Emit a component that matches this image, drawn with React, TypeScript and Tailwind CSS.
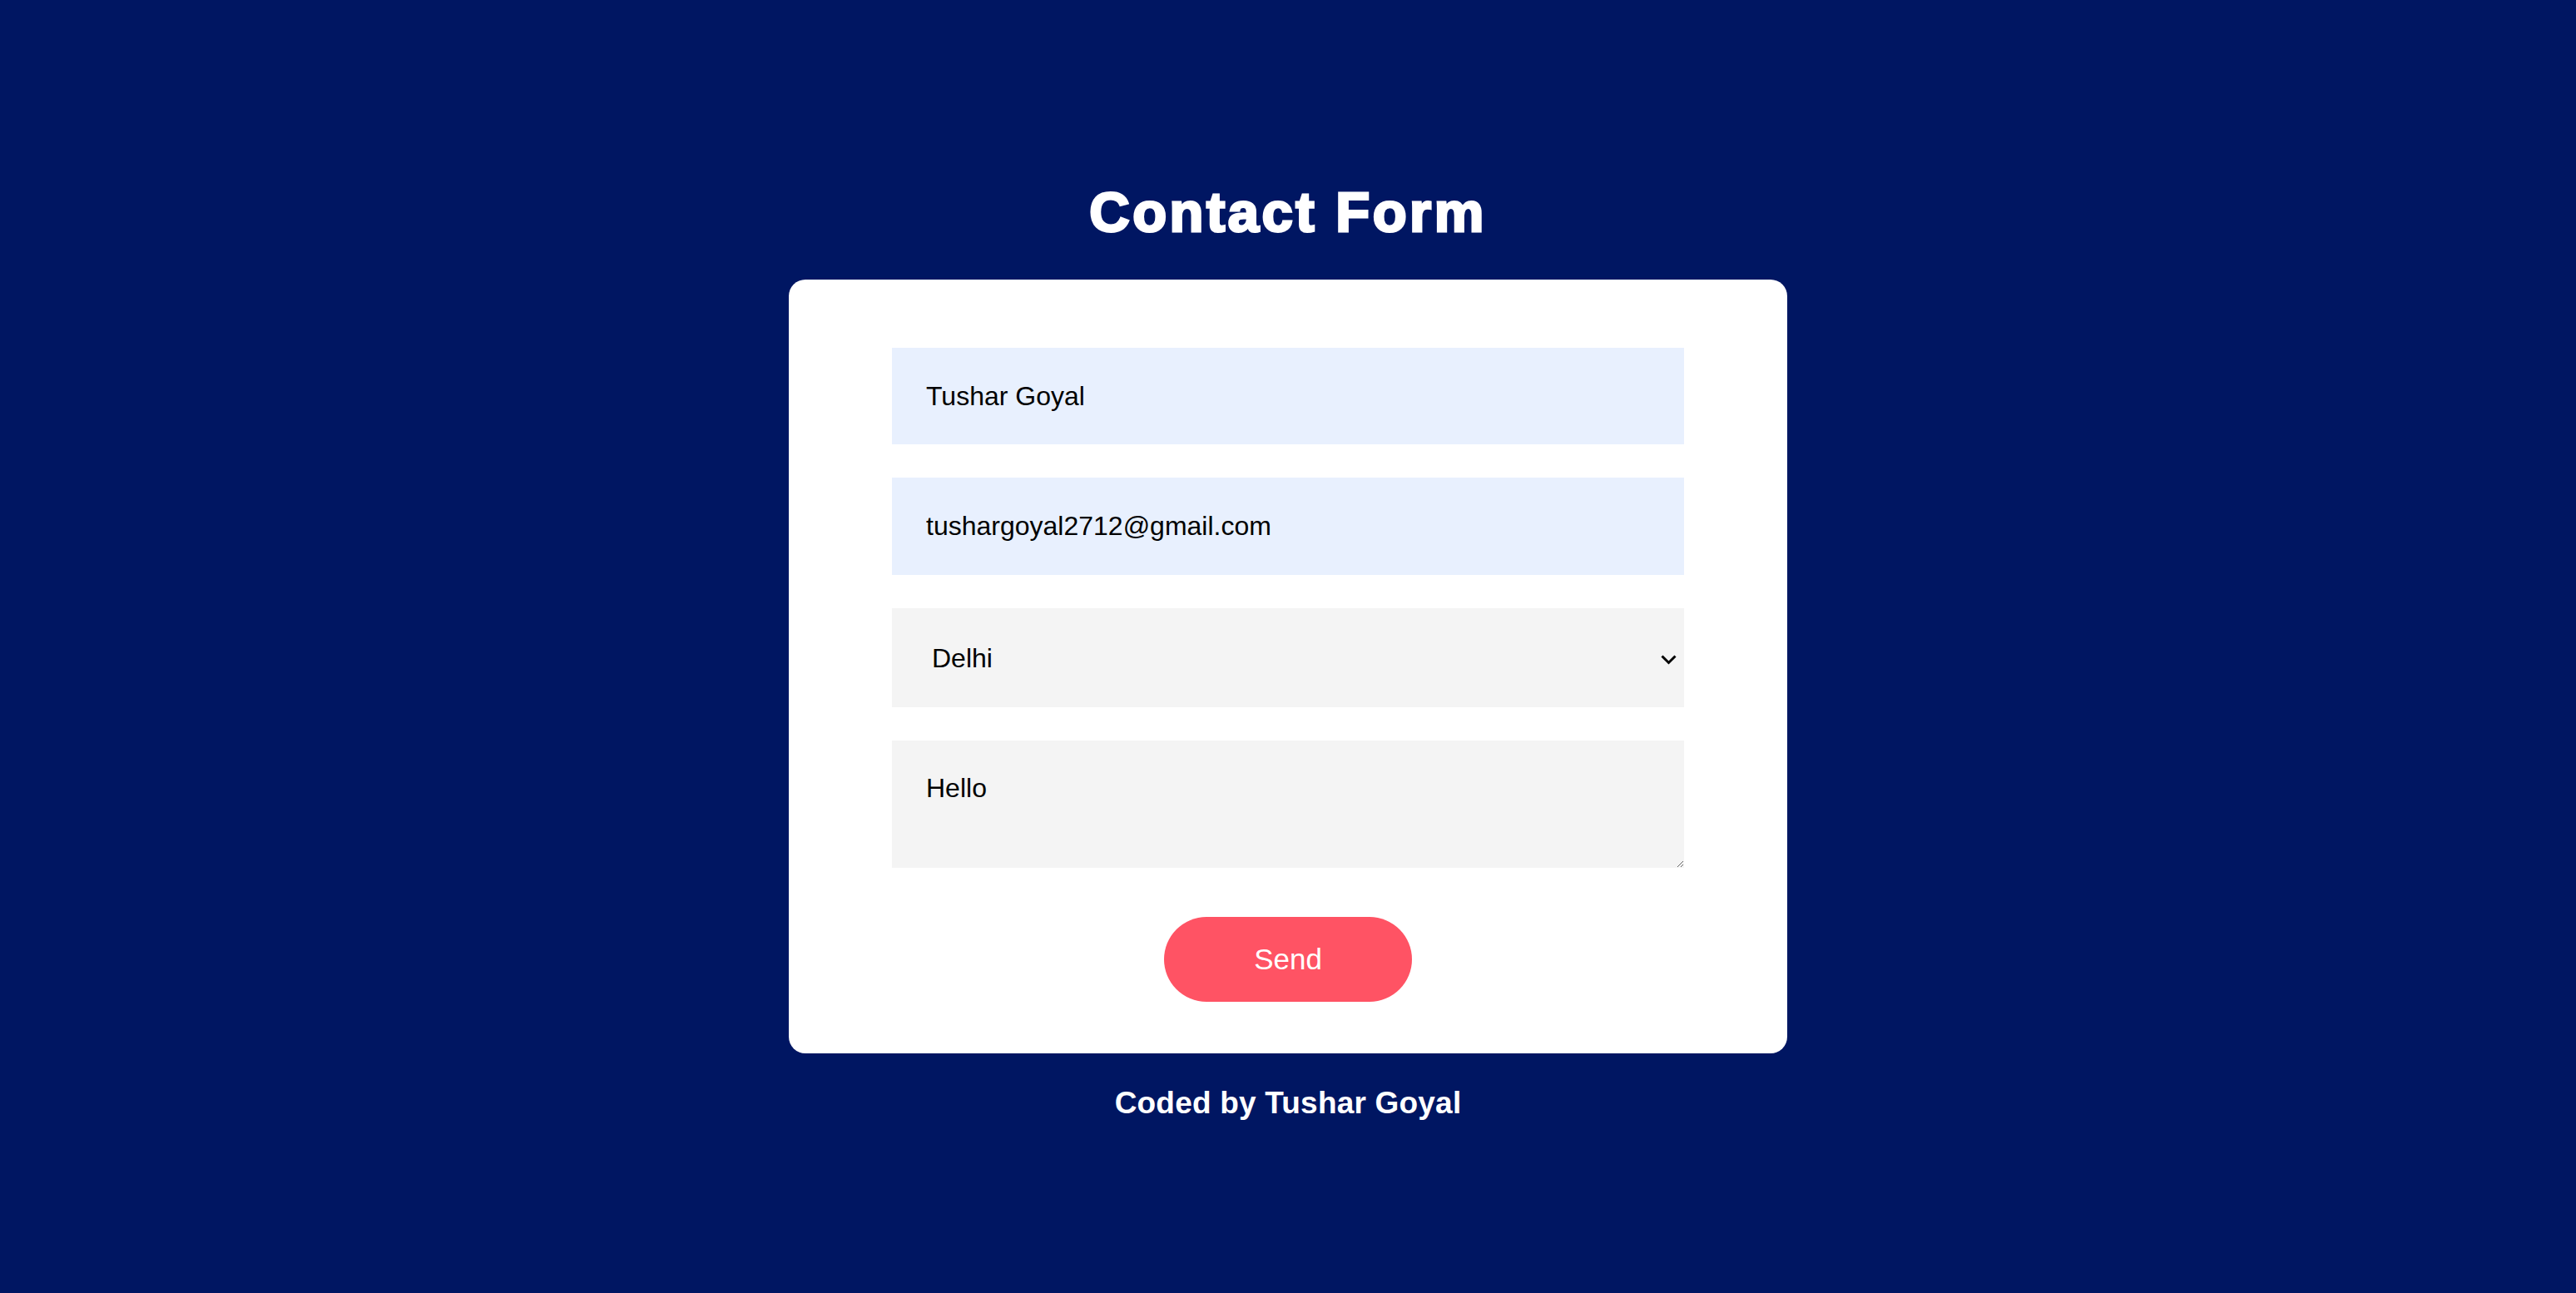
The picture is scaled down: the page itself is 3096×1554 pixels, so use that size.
import React from "react";

export default function App() {
  return (
    <div
      className="min-h-[1554px] w-full bg-[#001662] flex flex-col items-center pt-[221px]"
      style={{ fontFamily: '"Liberation Sans", Arial, sans-serif' }}
    >
      <h1 className="text-[67px] leading-none font-bold text-white tracking-[3.5px] [-webkit-text-stroke:3px_white]">
        Contact Form
      </h1>
      <form
        className="mt-[48px] w-[1200px] bg-white rounded-[20px] px-[124px] pt-[82px] pb-[62px] flex flex-col"
        onSubmit={(e) => e.preventDefault()}
      >
        <input
          type="text"
          defaultValue="Tushar Goyal"
          className="h-[116px] w-full bg-[#e8f0fe] px-[41px] text-[32px] text-black outline-none"
        />
        <input
          type="email"
          defaultValue="tushargoyal2712@gmail.com"
          className="mt-[40px] h-[117px] w-full bg-[#e8f0fe] px-[41px] text-[32px] text-black outline-none"
        />
        <div className="relative mt-[40px]">
          <select
            defaultValue="Delhi"
            className="appearance-none h-[119px] w-full bg-[#f4f4f4] pl-[48px] pr-[40px] text-[32px] text-black outline-none"
          >
            <option>Delhi</option>
            <option>Mumbai</option>
            <option>Bangalore</option>
          </select>
          <svg
            className="absolute right-[9px] top-[56px] pointer-events-none"
            width="19"
            height="12"
            viewBox="0 0 19 12"
            fill="none"
          >
            <path d="M1.5 1.5 L9.5 9.5 L17.5 1.5" stroke="black" strokeWidth="3" />
          </svg>
        </div>
        <textarea
          defaultValue="Hello"
          className="mt-[40px] h-[153px] w-full bg-[#f4f4f4] px-[41px] pt-[39px] text-[32px] leading-[normal] text-black outline-none block"
        />
        <button
          type="submit"
          className="mt-[59px] self-center w-[298px] h-[102px] rounded-full bg-[#ff5364] text-white text-[35px]"
        >
          Send
        </button>
      </form>
      <p className="mt-[41px] text-[37px] leading-none font-bold text-white tracking-[0.2px]">
        Coded by Tushar Goyal
      </p>
    </div>
  );
}
